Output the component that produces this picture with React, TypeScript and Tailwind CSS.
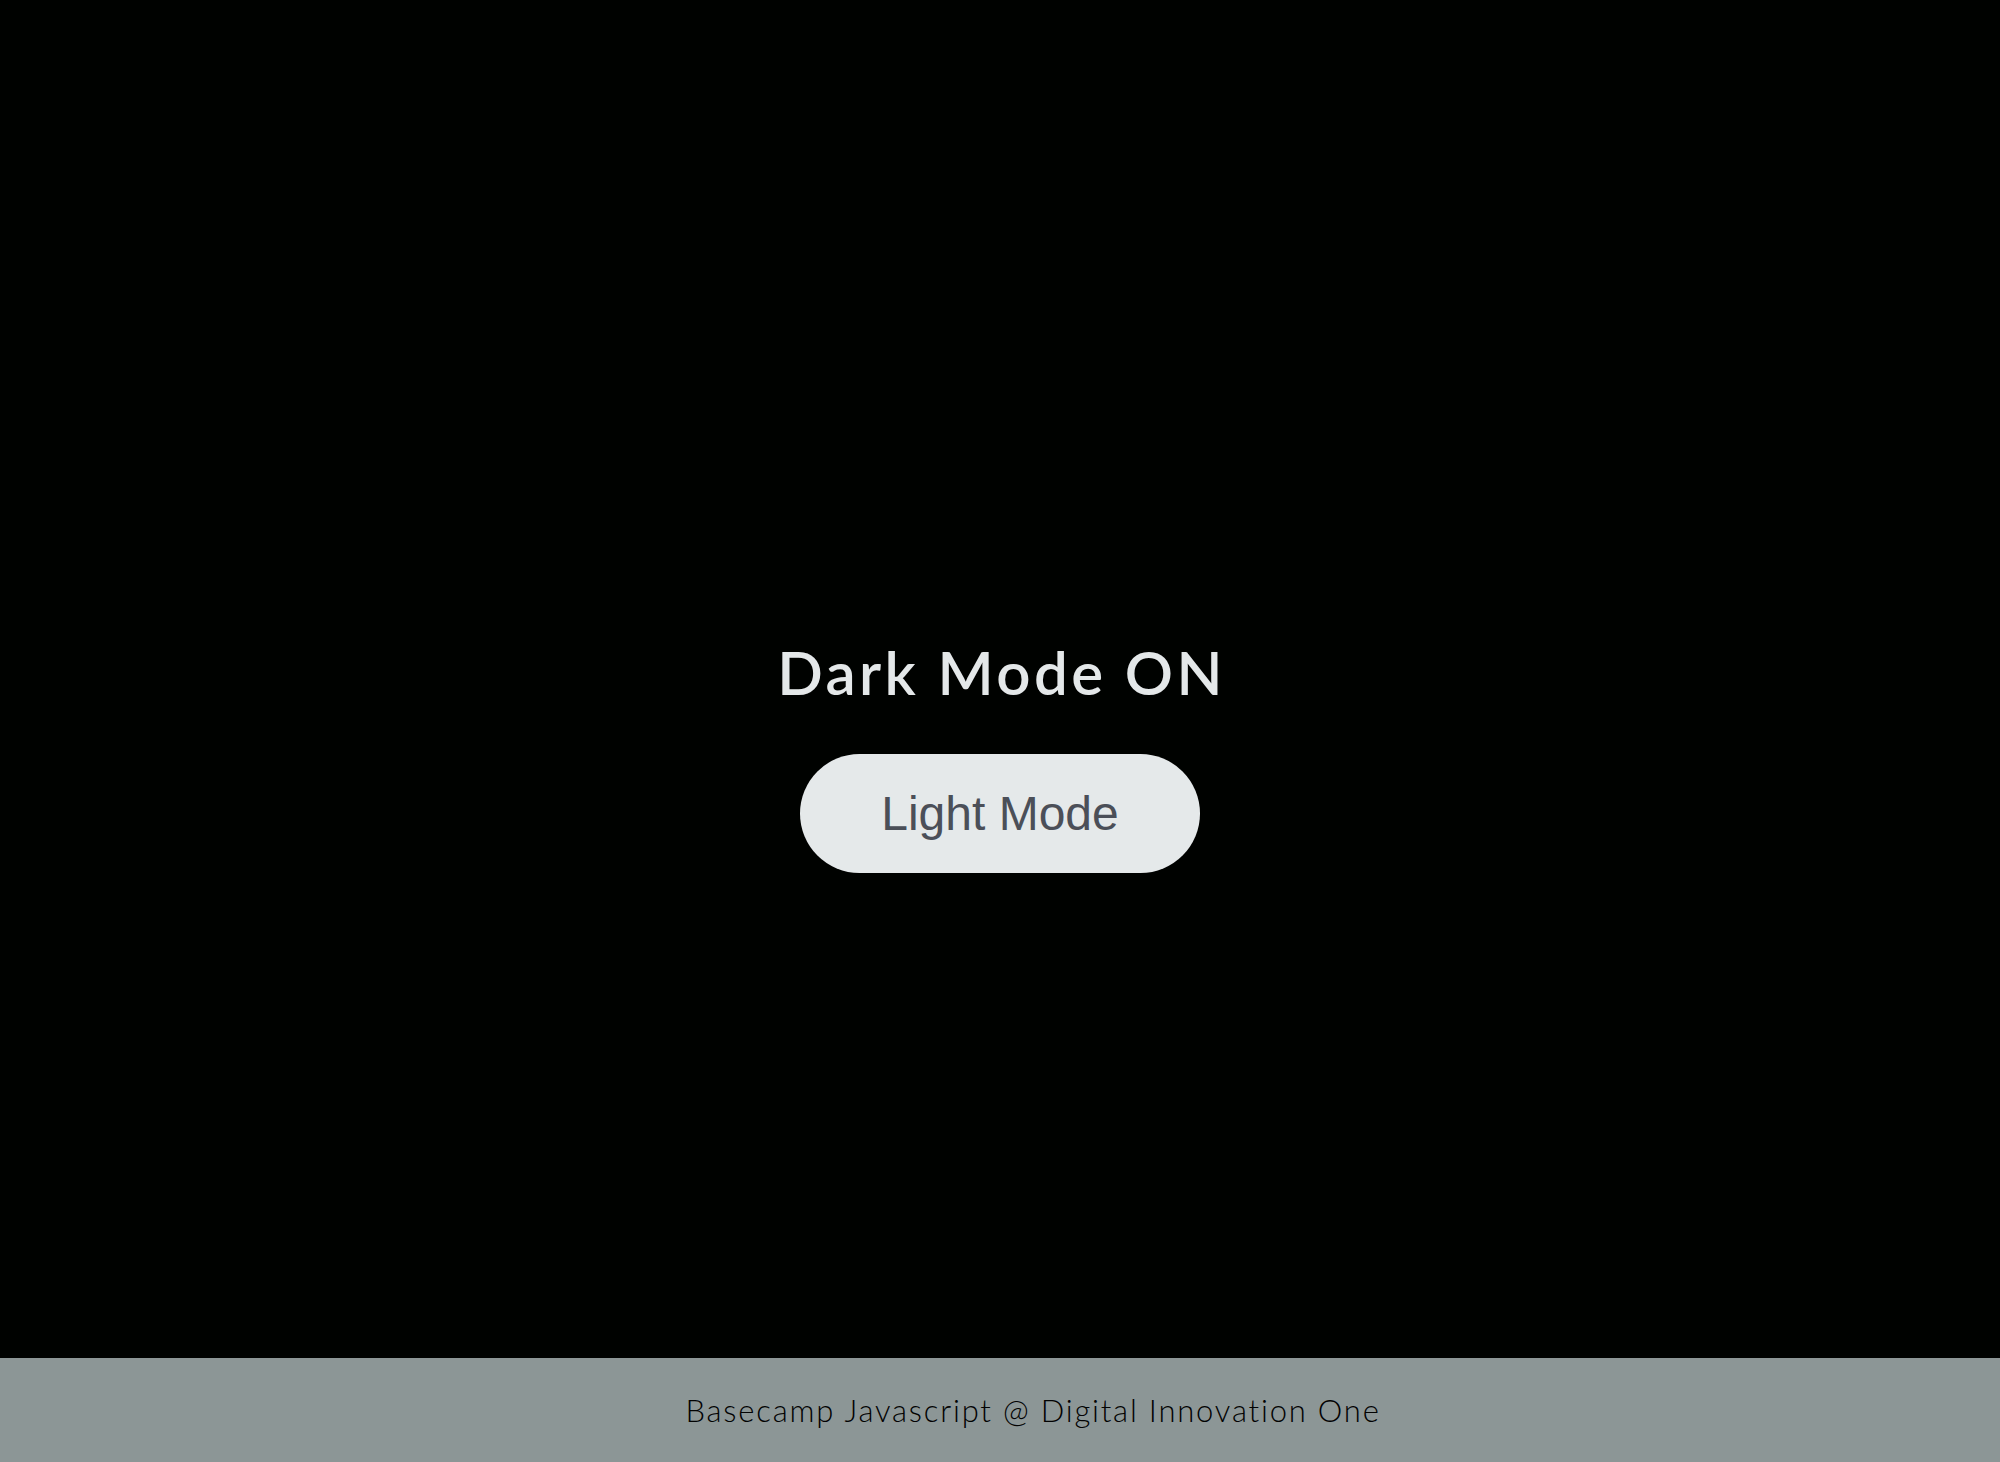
export default function App() {
  return (
    <div className="flex h-[1462px] flex-col bg-[#000200] font-['Lato','Noto_Sans',sans-serif]">
      <main className="flex flex-1 flex-col items-center pt-[636px]">
        <h1 className="pl-[3px] text-[60px] font-semibold leading-[1.2] tracking-[3.4px] text-[#e4e8e9]">
          Dark Mode ON
        </h1>
        <button className="mt-[46px] flex h-[119px] w-[400px] items-center justify-center rounded-full bg-[#e5e9ea] font-['Liberation_Sans',Arial,sans-serif] text-[48px] text-[#4b4f58]">
          Light Mode
        </button>
      </main>
      <footer className="flex h-[104px] items-center justify-center bg-[#8c9696] pl-[66px] text-[31px] font-light tracking-[1.8px] text-[#020202]">
        Basecamp Javascript @ Digital Innovation One
      </footer>
    </div>
  );
}
